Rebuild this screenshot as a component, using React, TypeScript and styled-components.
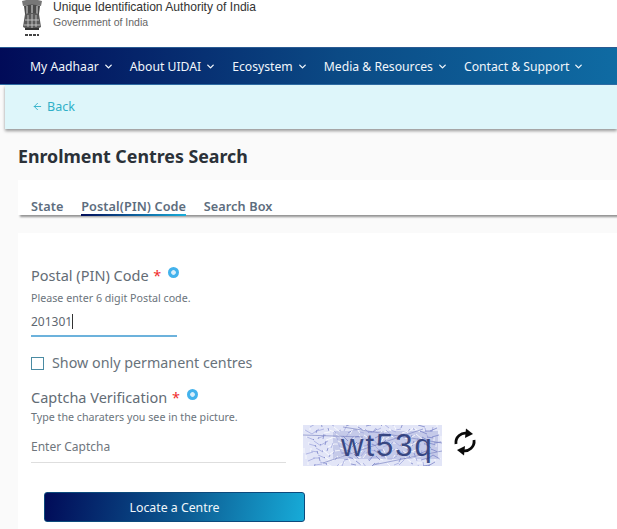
import styled, { createGlobalStyle } from "styled-components";
import { ArrowLeft, ChevronDown } from "lucide-react";

const Global = createGlobalStyle`
  html, body {
    margin: 0;
    padding: 0;
    background: #fafafa;
    font-family: "Noto Sans", "Open Sans", sans-serif;
    overflow: hidden;
  }
  * { box-sizing: border-box; }
`;

const Page = styled.div`
  width: 617px;
  height: 529px;
  overflow: hidden;
`;

const Header = styled.header`
  height: 47px;
  background: #fff;
  display: flex;
  gap: 7px;
  padding-left: 18px;
`;

const HeaderText = styled.div`
  font-family: "Liberation Sans", Arial, sans-serif;
  display: flex;
  flex-direction: column;
`;

const OrgName = styled.div`
  font-size: 12.1px;
  line-height: 15px;
  color: #333;
`;

const OrgSub = styled.div`
  font-size: 10.5px;
  line-height: 14px;
  color: #666;
`;

const Nav = styled.nav`
  height: 38px;
  background: linear-gradient(90deg, #010b58 0%, #0b4a85 55%, #0f6ba3 100%);
  border-top: 1px solid #2a5b93;
  border-bottom: 1px solid #2f6ea6;
  display: flex;
  align-items: center;
  gap: 16px;
  padding-left: 30px;
`;

const NavItem = styled.div`
  display: flex;
  align-items: center;
  gap: 4px;
  color: #f1f6fb;
  font-size: 12.2px;
  white-space: nowrap;
`;

const BackBar = styled.div`
  height: 44px;
  margin-left: 5px;
  padding-bottom: 2px;
  background: #def6fa;
  box-shadow: 0 2px 3px rgba(0, 0, 0, 0.4);
  display: flex;
  align-items: center;
  gap: 4px;
  padding-left: 27px;
  color: #2fb0c8;
  font-size: 12.5px;
`;

const Title = styled.h1`
  margin: 16px 0 0 18px;
  font-size: 17.8px;
  line-height: 22px;
  font-weight: 700;
  color: #2b3138;
`;

const TabCard = styled.div`
  margin: 13px 0 0 18px;
  height: 35px;
  background: #fff;
  box-shadow: 2px 2px 2px rgba(0, 0, 0, 0.42);
  display: flex;
  align-items: flex-end;
  gap: 17.5px;
  padding-left: 13px;
`;

const Tab = styled.div<{ $active?: boolean }>`
  font-size: 12.7px;
  font-weight: 600;
  line-height: 16px;
  letter-spacing: 0.1px;
  color: #5d6d7e;
  height: 18px;
  border-bottom: 2px solid transparent;
  border-image: ${(p) =>
    p.$active ? "linear-gradient(90deg, #010b58, #18aedb) 1" : "none"};
  margin-bottom: -1px;
  white-space: nowrap;
`;

const FormCard = styled.main`
  margin: 18px 0 0 18px;
  background: #fff;
  height: 300px;
  padding: 32px 0 0 13px;
`;

const LabelRow = styled.div`
  display: flex;
  align-items: flex-start;
  gap: 5px;
  font-size: 14.5px;
  line-height: 20px;
  color: #636c75;
  white-space: nowrap;
`;

const Star = styled.span`
  color: #f02a2a;
  margin-left: 1px;
`;

const InfoDot = styled.span`
  width: 11px;
  height: 11px;
  border-radius: 50%;
  margin: 2px 0 0 2px;
  background: radial-gradient(circle, #d8eefb 0 25%, #43b2ec 35% 100%);
`;

const Hint = styled.div<{ $gap: number }>`
  margin-top: ${(p) => p.$gap}px;
  font-size: 10.7px;
  line-height: 14px;
  color: #6b747c;
`;

const PinField = styled.div`
  width: 146px;
  height: 24px;
  margin-top: 8px;
  border-bottom: 2px solid #6cb2dc;
  font-size: 12px;
  line-height: 17px;
  color: #5f6770;
  display: flex;
`;

const Caret = styled.span`
  width: 1px;
  height: 15px;
  margin-top: 1px;
  background: #333;
`;

const CheckRow = styled.label`
  display: flex;
  align-items: center;
  gap: 8px;
  margin-top: 16px;
  font-size: 14.3px;
  line-height: 20px;
  color: #68727b;
`;

const CheckBox = styled.span`
  width: 13px;
  height: 13px;
  border: 1.5px solid #4a8ba3;
  background: #fff;
`;

const CaptchaLabel = styled(LabelRow)`
  margin-top: 14px;
`;

const CaptchaRow = styled.div`
  display: flex;
  align-items: flex-start;
`;

const CaptchaField = styled.div`
  width: 255px;
  height: 33px;
  margin-top: 6px;
  border-bottom: 1px solid #dedede;
  font-size: 12px;
  line-height: 34px;
  color: #6f767d;
`;

const CaptchaImage = styled.div`
  position: relative;
  width: 139px;
  height: 41px;
  margin: 1px 0 0 17px;
  overflow: hidden;
  background: #e2e5f7;
`;

const CaptchaText = styled.span`
  position: absolute;
  left: 38px;
  top: 2px;
  font-family: "Liberation Sans", Arial, sans-serif;
  font-size: 31px;
  line-height: 38px;
  letter-spacing: 2px;
  color: #2a3a78;
  opacity: 0.9;
`;

const Refresh = styled.div`
  margin: 4px 0 0 11px;
  width: 24px;
  height: 28px;
`;

const LocateButton = styled.button`
  display: block;
  width: 261px;
  height: 30px;
  margin: 26px 0 0 13px;
  border: 1px solid #0c4a7c;
  border-radius: 3px;
  background: linear-gradient(100deg, #010b58 0%, #0c5c93 55%, #17abd8 100%);
  color: #f1f7fb;
  font-family: inherit;
  font-size: 12.3px;
`;

function Emblem() {
  return (
    <svg width="28" height="38" viewBox="0 0 28 38" fill="none">
      <path d="M4 1 Q14 -2 24 1 L23 6 Q14 4 5 6 Z" fill="#777" />
      <path d="M6 6 Q14 3 22 6 L21 14 L7 14 Z" fill="#4a4a4a" />
      <path d="M9 6v8M14 5v9M19 6v8" stroke="#ddd" strokeWidth="1" />
      <path d="M7 14 Q14 12 21 14 L23 27 Q14 33 5 27 Z" fill="#5a5a5a" />
      <path d="M10 15v12M14 14v15M18 15v12M7 20h14M6 25h16" stroke="#c8c8c8" strokeWidth="0.9" />
      <path d="M7 29h14" stroke="#333" strokeWidth="2" />
      <path d="M7 35h14" stroke="#444" strokeWidth="2" strokeDasharray="3 1" />
    </svg>
  );
}

function CaptchaNoise() {
  // fake noise: lots of short scribbles plus a darker band behind the letters
  const lines = Array.from({ length: 260 }, (_, i) => {
    const x1 = (i * 37) % 139;
    const y1 = (i * 23) % 41;
    const x2 = x1 + ((i * 13) % 15) - 7;
    const y2 = y1 + ((i * 7) % 11) - 5;
    return (
      <line
        key={i}
        x1={x1}
        y1={y1}
        x2={x2}
        y2={y2}
        stroke={i % 3 === 0 ? "#7d86c9" : i % 3 === 1 ? "#ffffff" : "#a3aade"}
        strokeWidth={0.8}
      />
    );
  });
  return (
    <svg width="139" height="41" viewBox="0 0 139 41">
      <rect x="30" y="6" width="105" height="28" fill="#8e97cf" opacity="0.35" />
      {lines}
      <path d="M0 10 L60 12 M40 2 L139 18 M20 38 L120 4 M70 40 L139 26" stroke="#8088c4" strokeWidth="0.7" />
    </svg>
  );
}

function RefreshIcon() {
  return (
    <svg width="24" height="28" viewBox="0 0 24 28" fill="none" stroke="#0a0a0a" strokeWidth="2.8">
      <path d="M3 16 A9.5 9.5 0 0 1 15 5.5" />
      <path d="M21 12 A9.5 9.5 0 0 1 9 22.5" />
      <path d="M13 0.5 L20 6 L12 10 Z" fill="#0a0a0a" stroke="none" />
      <path d="M11 27.5 L4 22 L12 18 Z" fill="#0a0a0a" stroke="none" />
    </svg>
  );
}

const navItems = [
  "My Aadhaar",
  "About UIDAI",
  "Ecosystem",
  "Media & Resources",
  "Contact & Support",
];

export default function App() {
  return (
    <Page>
      <Global />
      <Header>
        <Emblem />
        <HeaderText>
          <OrgName>Unique Identification Authority of India</OrgName>
          <OrgSub>Government of India</OrgSub>
        </HeaderText>
      </Header>
      <Nav>
        {navItems.map((item) => (
          <NavItem key={item}>
            {item}
            <ChevronDown size={11} strokeWidth={3} />
          </NavItem>
        ))}
      </Nav>
      <BackBar>
        <ArrowLeft size={11} strokeWidth={2} />
        Back
      </BackBar>
      <Title>Enrolment Centres Search</Title>
      <TabCard>
        <Tab>State</Tab>
        <Tab $active>Postal(PIN) Code</Tab>
        <Tab>Search Box</Tab>
      </TabCard>
      <FormCard>
        <LabelRow>
          <span>
            Postal (PIN) Code <Star>*</Star>
          </span>
          <InfoDot />
        </LabelRow>
        <Hint $gap={6}>Please enter 6 digit Postal code.</Hint>
        <PinField>
          201301
          <Caret />
        </PinField>
        <CheckRow>
          <CheckBox />
          Show only permanent centres
        </CheckRow>
        <CaptchaLabel>
          <span>
            Captcha Verification <Star>*</Star>
          </span>
          <InfoDot />
        </CaptchaLabel>
        <Hint $gap={3}>Type the charaters you see in the picture.</Hint>
        <CaptchaRow>
          <CaptchaField>Enter Captcha</CaptchaField>
          <CaptchaImage>
            <CaptchaNoise />
            <CaptchaText>wt53q</CaptchaText>
          </CaptchaImage>
          <Refresh>
            <RefreshIcon />
          </Refresh>
        </CaptchaRow>
        <LocateButton>Locate a Centre</LocateButton>
      </FormCard>
    </Page>
  );
}
